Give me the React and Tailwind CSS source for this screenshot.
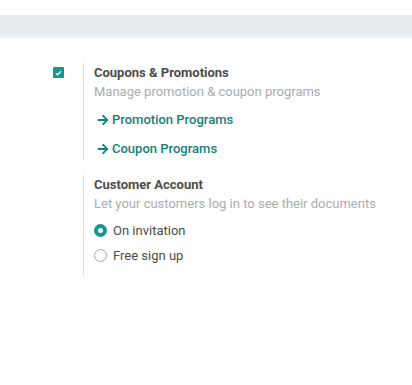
import React from "react";

function Arrow() {
    return (
        <svg width="12" height="12" viewBox="0 0 448 512" className="fill-current">
            <path d="M190.5 66.9l22.2-22.2c9.4-9.4 24.6-9.4 33.9 0L441 239c9.4 9.4 9.4 24.6 0 33.9L246.6 467.3c-9.4 9.4-24.6 9.4-33.9 0l-22.2-22.2c-9.5-9.5-9.3-25 .4-34.3L311.4 296H24c-13.3 0-24-10.7-24-24v-32c0-13.3 10.7-24 24-24h287.4L190.9 101.2c-9.8-9.3-10-24.8-.4-34.3z" />
        </svg>
    );
}

function Radio({ checked, label }) {
    return (
        <div className="flex items-center h-[19px]">
            {checked ? (
                <span className="w-[13px] h-[13px] rounded-full bg-[#16978f] flex items-center justify-center">
                    <span className="w-[5px] h-[5px] rounded-full bg-white" />
                </span>
            ) : (
                <span className="w-[13px] h-[13px] rounded-full border border-[#a6a6a6] bg-white" />
            )}
            <span className="ml-[6px] text-[#4c4c4c]">{label}</span>
        </div>
    );
}

export default function App() {
    return (
        <div className="w-[412px] h-[385px] bg-white overflow-hidden text-[13px] font-['Roboto',sans-serif]">
            <div className="h-[15px] pt-[9px]">
                <div className="h-px bg-[#f6f7f8]" />
            </div>
            <div className="h-[20px] bg-[#e9ecef] border-b-[3px] border-[#eff1f3] box-content" />

            <div className="flex mt-[25px]">
                <div className="w-[83px] pl-[53px] pt-[4px]">
                    <span className="w-[11px] h-[11px] rounded-[1px] bg-[#16978f] flex items-center justify-center">
                        <svg width="7" height="6" viewBox="0 0 7 6">
                            <path d="M1 3.2l1.7 1.6L6 1.2" stroke="white" strokeWidth="1.3" fill="none" />
                        </svg>
                    </span>
                </div>
                <div className="border-l border-[#d9d9d9] pl-[10px] h-[97px] leading-[19px]">
                    <div className="font-bold text-[#4c4c4c]">Coupons &amp; Promotions</div>
                    <div className="text-[#a8adb2]">Manage promotion &amp; coupon programs</div>
                    <div className="mt-[9px] flex items-center gap-[3px] text-[#15807b] font-medium h-[19px] pl-[3px]">
                        <Arrow />
                        <span>Promotion Programs</span>
                    </div>
                    <div className="mt-[10px] flex items-center gap-[3px] text-[#15807b] font-medium h-[19px] pl-[3px]">
                        <Arrow />
                        <span>Coupon Programs</span>
                    </div>
                </div>
            </div>

            <div className="flex mt-[15px]">
                <div className="w-[83px]" />
                <div className="border-l border-[#d9d9d9] pl-[10px] h-[100px] leading-[19px]">
                    <div className="font-bold text-[#4c4c4c]">Customer Account</div>
                    <div className="text-[#a8adb2]">Let your customers log in to see their documents</div>
                    <div className="mt-[8px]">
                        <Radio checked label="On invitation" />
                    </div>
                    <div className="mt-[6px]">
                        <Radio label="Free sign up" />
                    </div>
                </div>
            </div>
        </div>
    );
}
